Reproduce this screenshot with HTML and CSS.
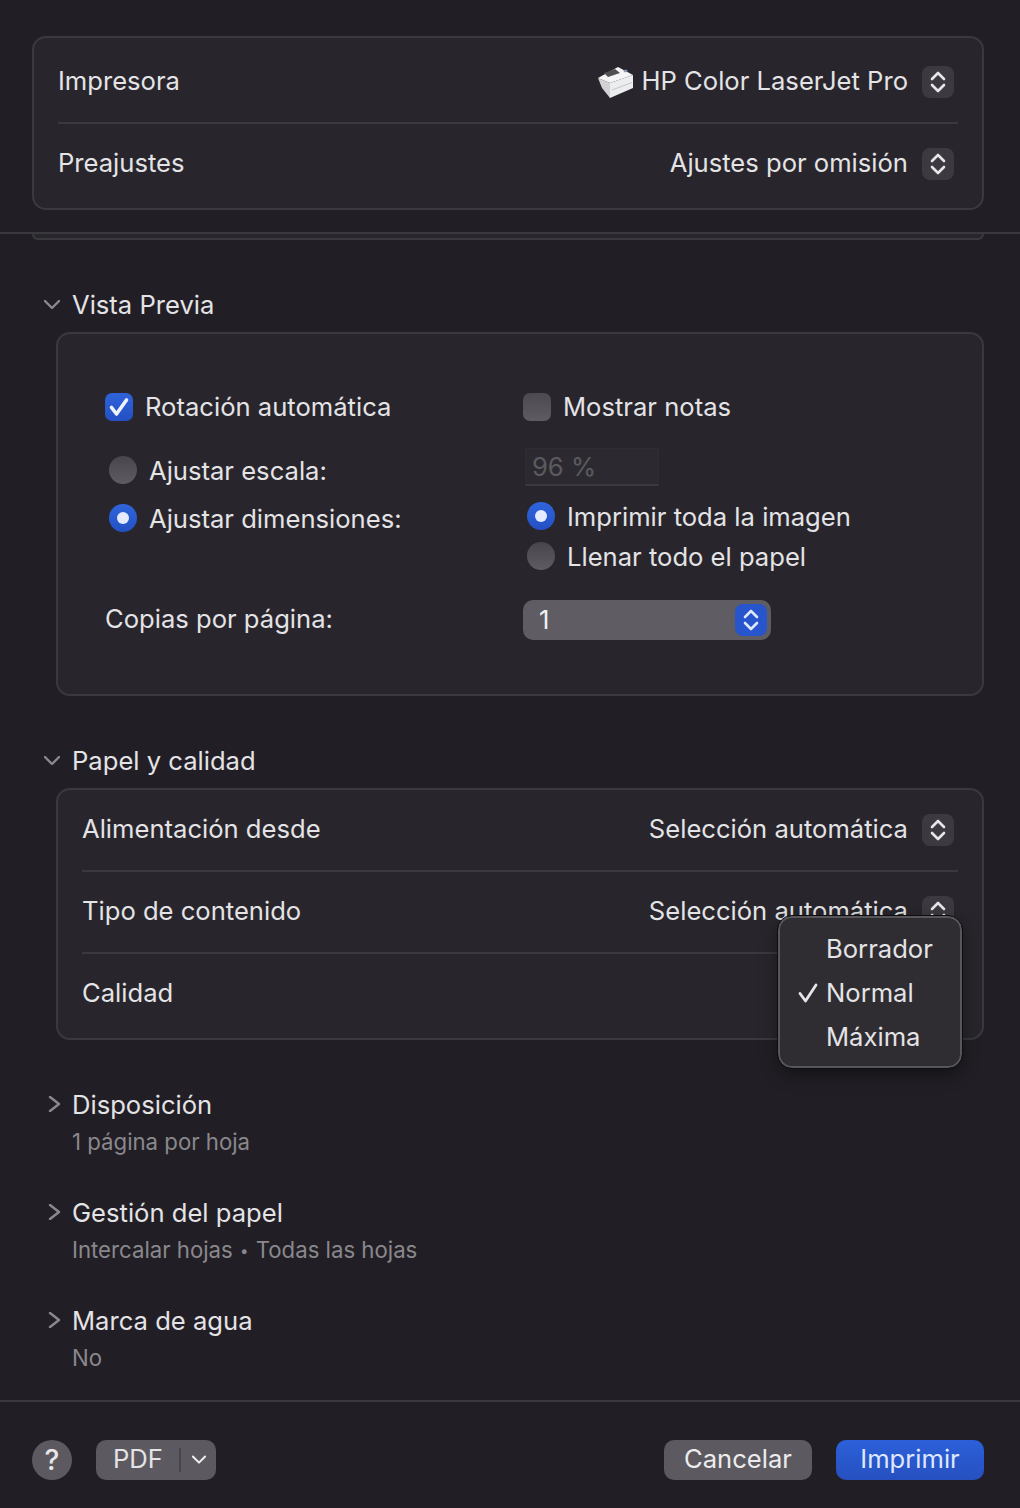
FILE: index.html
```html
<!DOCTYPE html>
<html lang="es">
<head>
<meta charset="utf-8">
<title>Imprimir</title>
<link rel="stylesheet" href="styles.css">
</head>
<body>
<svg class="defs" width="0" height="0" aria-hidden="true">
  <symbol id="updown" viewBox="0 0 32 32"><path d="M10 13 16 7 22 13M10 19 16 25 22 19" fill="none" stroke="currentColor" stroke-width="2.600" stroke-linecap="round" stroke-linejoin="round"/></symbol>
  <symbol id="down" viewBox="0 0 16 16"><path d="M1 4 8 11 15 4" fill="none" stroke="currentColor" stroke-width="2.400" stroke-linecap="round" stroke-linejoin="round"/></symbol>
  <symbol id="right" viewBox="0 0 16 16"><path d="M3 1 12 8 3 15" fill="none" stroke="currentColor" stroke-width="2.400" stroke-linecap="round" stroke-linejoin="round"/></symbol>
</svg>
<div class="dialog">
  <header class="top">
    <div class="card printer-card">
      <div class="row first">
        <span>Impresora</span>
        <span class="value">
          <svg class="printer" viewBox="0 0 36 32" aria-hidden="true">
            <path d="M0 11 20 0 35 8 12 16Z" fill="#f4f4f5"/>
            <path d="M0 11 12 16 12 31 4 21Z" fill="#d2d2d6"/>
            <path d="M12 16 35 8 35 21 12 31Z" fill="#ecedef"/>
            <path d="M6 6 17 2 22 6 10 10Z" fill="#4f4f54"/>
            <path d="M14 23 34 15.500" stroke="#c4c4c8" stroke-width="1"/>
            <path d="M25 3.500 28 2.500 30 4 27 5.500Z" fill="#8a94b0"/>
          </svg>
          <span>HP Color LaserJet Pro</span>
          <span class="stepper"><svg class="icon"><use href="#updown"/></svg></span>
        </span>
      </div>
      <div class="row">
        <span>Preajustes</span>
        <span class="value"><span>Ajustes por omisión</span><span class="stepper"><svg class="icon"><use href="#updown"/></svg></span></span>
      </div>
    </div>
  </header>
  <div class="peek"></div>

  <section class="section preview">
    <h2 class="title"><svg class="chev"><use href="#down"/></svg>Vista Previa</h2>
    <div class="card inset layout-card">
      <div class="opt-row r1">
        <label class="check on"><span class="box"><svg viewBox="0 0 28 28" aria-hidden="true"><path d="M6.500 14.500 11.500 21 21.500 7" fill="none" stroke="#eef2ff" stroke-width="3.600" stroke-linecap="round" stroke-linejoin="round"/></svg></span>Rotación automática</label>
        <label class="check"><span class="box"></span>Mostrar notas</label>
      </div>
      <div class="opt-row r2">
        <label class="radio"><span class="dot"></span>Ajustar escala:</label>
        <div class="field">96 %</div>
      </div>
      <div class="opt-row r3">
        <label class="radio on"><span class="dot"></span>Ajustar dimensiones:</label>
        <div class="sub-radios">
          <label class="radio on"><span class="dot"></span>Imprimir toda la imagen</label>
          <label class="radio"><span class="dot"></span>Llenar todo el papel</label>
        </div>
      </div>
      <div class="opt-row r4">
        <span class="r4-label">Copias por página:</span>
        <div class="combo"><span>1</span><span class="combo-btn"><svg class="icon"><use href="#updown"/></svg></span></div>
      </div>
    </div>
  </section>

  <section class="section paper">
    <h2 class="title"><svg class="chev"><use href="#down"/></svg>Papel y calidad</h2>
    <div class="card inset paper-card">
      <div class="row first">
        <span>Alimentación desde</span>
        <span class="value"><span>Selección automática</span><span class="stepper"><svg class="icon"><use href="#updown"/></svg></span></span>
      </div>
      <div class="row">
        <span>Tipo de contenido</span>
        <span class="value"><span>Selección automática</span><span class="stepper"><svg class="icon"><use href="#updown"/></svg></span></span>
      </div>
      <div class="row last">
        <span>Calidad</span>
      </div>
      <ul class="menu">
        <li>Borrador</li>
        <li class="selected"><svg class="tick" viewBox="0 0 20 20" aria-hidden="true"><path d="M2 10.500 7.500 18 18 2" fill="none" stroke="#e6e6e8" stroke-width="2.800" stroke-linecap="round" stroke-linejoin="round"/></svg>Normal</li>
        <li>Máxima</li>
      </ul>
    </div>
  </section>

  <section class="collapsed first-collapsed">
    <h2 class="title"><svg class="chev side"><use href="#right"/></svg>Disposición</h2>
    <p class="note">1 página por hoja</p>
  </section>
  <section class="collapsed">
    <h2 class="title"><svg class="chev side"><use href="#right"/></svg>Gestión del papel</h2>
    <p class="note">Intercalar hojas <span class="sep">•</span> Todas las hojas</p>
  </section>
  <section class="collapsed">
    <h2 class="title"><svg class="chev side"><use href="#right"/></svg>Marca de agua</h2>
    <p class="note">No</p>
  </section>

  <footer class="bottom">
    <div class="group">
      <button class="help" type="button">?</button>
      <div class="pdf"><span class="pdf-label">PDF</span><span class="pdf-arrow"><svg class="mini"><use href="#down"/></svg></span></div>
    </div>
    <div class="group actions">
      <button class="btn" type="button">Cancelar</button>
      <button class="btn primary" type="button">Imprimir</button>
    </div>
  </footer>
</div>
</body>
</html>
```
FILE: styles.css
```css
* { box-sizing: border-box; }
html, body { margin: 0; padding: 0; }
body {
  width: 1020px;
  height: 1508px;
  overflow: hidden;
  background: #211f25;
  color: #e4e3e6;
  font-family: Inter, "Liberation Sans", sans-serif;
  font-size: 25.6px;
  line-height: 30px;
}
.defs { position: absolute; }
.dialog { display: flex; flex-direction: column; height: 1508px; }

.top { height: 234px; padding: 36px 36px 0 32px; border-bottom: 2px solid #39383c; }
.card { background: #28262c; border: 2px solid #3a393e; border-radius: 14px; }
.printer-card { height: 174px; padding: 0 24px; }
.peek {
  height: 6px;
  margin: 0 36px 0 32px;
  background: #28262c;
  border: 2px solid #3a393e;
  border-top: 0;
  border-radius: 0 0 12px 12px;
}

.row {
  display: flex;
  justify-content: space-between;
  align-items: center;
  height: 82px;
  padding-bottom: 2px;
  border-top: 2px solid #3a393e;
}
.row.first { border-top: 0; height: 84px; padding: 2px 0 0; }
.value { display: flex; align-items: center; }
.printer { width: 36px; height: 32px; margin: 4px 8px 0 0; }
.stepper {
  display: flex;
  width: 32px;
  height: 32px;
  margin: 2px 4px 0 14px;
  background: #3c3a40;
  border-radius: 8px;
  color: #e6e6e8;
}
.icon { width: 32px; height: 32px; display: block; }

.title {
  display: flex;
  align-items: center;
  height: 30px;
  margin: 0;
  font-size: 25.6px;
  font-weight: 400;
}
.chev { width: 16px; height: 16px; margin: 0 12px 0 44px; color: #8b898e; }
.chev.side { margin: -2px 9px 0 47px; }

.preview { margin-top: 50px; }
.inset { margin: 12px 36px 0 56px; padding: 0 24px; }
.layout-card { height: 364px; padding: 58px 0 0 47px; }

.opt-row { display: grid; grid-template-columns: 418px 1fr; align-items: center; }
.r1 { height: 30px; }
.r2 { margin-top: 25px; height: 40px; }
.r2 .radio { padding-top: 8px; }
.r3 { margin-top: 15px; align-items: start; }
.r4 { margin-top: 28px; height: 40px; }
.r4-label { padding-bottom: 2px; }

.check, .radio { display: flex; align-items: center; }
.box {
  width: 28px;
  height: 28px;
  margin-right: 12px;
  border-radius: 7px;
  background: linear-gradient(#4c4a50, #5e5c62);
}
.box svg { display: block; width: 28px; height: 28px; }
.check.on .box { background: linear-gradient(#2f62d8, #2450c4); }
.radio { padding: 2px 0 0 4px; }
.dot {
  display: flex;
  align-items: center;
  justify-content: center;
  width: 28px;
  height: 28px;
  margin: 0 12px 2px 0;
  border-radius: 50%;
  background: linear-gradient(#48464c, #5e5c62);
}
.radio.on .dot { background: linear-gradient(#2f65dc, #2450c4); }
.radio.on .dot::after {
  content: "";
  width: 12px;
  height: 12px;
  border-radius: 50%;
  background: #e4ebff;
}
.field {
  width: 134px;
  height: 38px;
  margin-left: 2px;
  padding: 3px 6px;
  background: #2c2a30;
  border: 1px solid #2f2d33;
  border-bottom: 2px solid #3a393e;
  color: #5b5a5f;
}
.sub-radios { display: flex; flex-direction: column; gap: 8px; margin-top: -2px; }

.combo {
  display: flex;
  align-items: center;
  justify-content: space-between;
  width: 248px;
  height: 40px;
  padding: 0 4px 0 16px;
  border-radius: 10px;
  background: #5f5d63;
  color: #f0f0f2;
}
.combo-btn {
  display: flex;
  width: 32px;
  height: 32px;
  border-radius: 8px;
  background: #2755cc;
  color: #dfe7ff;
}

.paper { margin-top: 50px; }
.paper-card { position: relative; height: 252px; margin-top: 12px; }
.paper-card .row.first { height: 80px; padding: 0 0 2px; }
.paper-card .row.last { height: 84px; padding-bottom: 4px; }

.menu {
  position: absolute;
  left: 720px;
  top: 126px;
  width: 184px;
  height: 152px;
  margin: 0;
  padding: 11px 0;
  list-style: none;
  background: #2f2d32;
  border: 2px solid #57565b;
  outline: 1px solid #0e0d10;
  border-radius: 14px;
  box-shadow: 0 6px 18px rgba(0, 0, 0, .45);
}
.menu li { position: relative; height: 44px; line-height: 40px; padding-left: 46px; }
.tick { position: absolute; left: 18px; top: 10px; width: 20px; height: 20px; }

.collapsed { height: 108px; }
.collapsed:last-of-type { height: 94px; }
.first-collapsed { margin-top: 50px; }
.note { margin: 8px 0 0 72px; font-size: 22.200px; line-height: 28px; color: #8a888d; }
.sep { padding: 0 1px; font-size: 15px; vertical-align: 2px; }

.bottom {
  display: flex;
  justify-content: space-between;
  align-items: center;
  flex: 1;
  padding: 10px 36px 0 32px;
  border-top: 2px solid #39383c;
}
.group { display: flex; align-items: center; gap: 24px; }
.help {
  width: 40px;
  height: 40px;
  padding: 0;
  border: 0;
  border-radius: 50%;
  background: #5c5a60;
  color: #e8e8ea;
  font: 500 28px/40px Inter, "Liberation Sans", sans-serif;
}
.pdf {
  display: flex;
  align-items: center;
  width: 120px;
  height: 40px;
  border-radius: 10px;
  background: #5c5a60;
}
.pdf-label { width: 85px; padding: 0 0 2px 17px; border-right: 2px solid #47454b; line-height: 22px; }
.pdf-arrow { display: flex; justify-content: center; flex: 1; color: #ececee; }
.mini { width: 14px; height: 14px; }
.btn {
  width: 148px;
  height: 40px;
  padding: 0 0 2px;
  border: 0;
  border-radius: 10px;
  background: #5c5a60;
  color: #ececee;
  font: 400 25.6px/36px Inter, "Liberation Sans", sans-serif;
}
.btn.primary { background: linear-gradient(#2c60d9, #2650c0); color: #dfe7ff; }
```
